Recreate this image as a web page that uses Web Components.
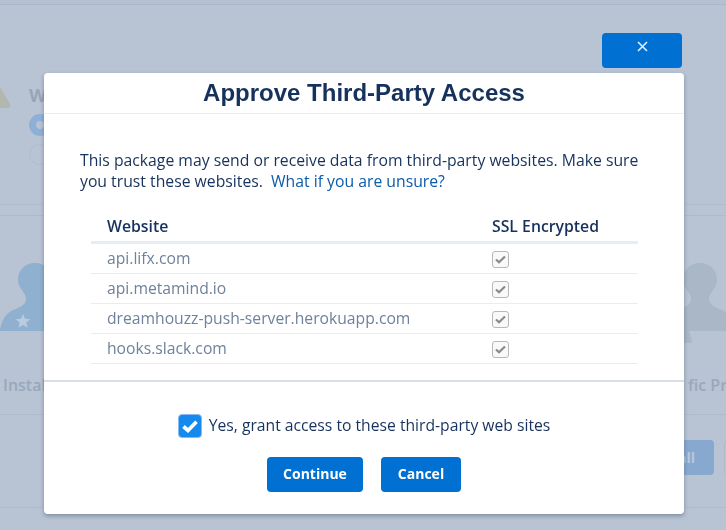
<!DOCTYPE html>
<html>
<head>
<meta charset="utf-8">
<title>Approve Third-Party Access</title>
<style>
  html, body { margin: 0; height: 100%; overflow: hidden; }
  body { background: #b8c4d3; font-family: "Open Sans", "Liberation Sans", sans-serif; color: #16325c; }
</style>
</head>
<body>
<install-page></install-page>
<approve-modal heading="Approve Third-Party Access">
  <site-row name="api.lifx.com"></site-row>
  <site-row name="api.metamind.io"></site-row>
  <site-row name="dreamhouzz-push-server.herokuapp.com"></site-row>
  <site-row name="hooks.slack.com"></site-row>
</approve-modal>

<script>
// person silhouette used behind the dialog, star and back shoulder are optional
const personSvg = (fill, star, back) => `
  <svg width="70" height="80" viewBox="0 0 70 80">
    ${back ? `<path fill="${fill}" d="M19 62C24 66 26 72 27 80H19z"/>` : ''}
    <path fill="${fill}" d="M35 0C24 0 18 8 18 17C18 26 26 29 26 36C26 42 20 44 13 47C5 50 1 60 0 67V68H70V67C69 60 65 50 57 47C50 44 44 42 44 36C44 29 52 26 52 17C52 8 46 0 35 0Z"/>
    ${star ? '<path fill="#b9cbdd" d="M23 51l2 4.800 5.400.4-4.100 3.400 1.300 5.200-4.600-2.800-4.600 2.800 1.300-5.200-4.100-3.400 5.400-.4z"/>' : ''}
  </svg>`;

const pageTemplate = document.createElement('template');
pageTemplate.innerHTML = /* html */`
  <style>
  :host {
    display: block;
    height: 530px;
    overflow: hidden;
    color: #98a7bb;
  }
  .top {
    height: 4px;
    border-bottom: 1px solid #aab8c9;
    background: #b5c1d0;
  }
  .status {
    border-bottom: 1px solid #b0bdcd;
    padding: 80px 0 0 29px;
    height: 119px;
    display: flex;
    flex-direction: column;
    position: relative;
  }
  .warn {
    position: absolute;
    left: -14px;
    top: 78px;
  }
  .status b {
    font-size: 18px;
    line-height: 20px;
    color: #98a5b8;
    height: 20px;
    font-weight: 700;
    margin-bottom: 9px;
  }
  .ring {
    width: 22px;
    height: 22px;
    border: 7px solid #8fb0d6;
    border-radius: 50%;
    box-sizing: border-box;
    margin-bottom: 8px;
  }
  .ghost {
    width: 21px;
    height: 21px;
    border: 1px solid #b0bdcd;
    border-radius: 50%;
    box-sizing: border-box;
  }
  .gap {
    height: 10px;
    border-bottom: 1px solid #aebbcb;
  }
  .people {
    height: 199px;
    border-bottom: 1px solid #aebbcb;
    box-sizing: border-box;
    padding-top: 47px;
    display: flex;
    justify-content: space-between;
  }
  .who {
    display: flex;
    flex-direction: column;
    font-size: 16px;
    font-weight: 600;
    line-height: 22px;
    gap: 31px;
    color: #99a8bc;
    width: 70px;
  }
  .who svg { display: block; }
  .who.left span { padding-left: 3px; }
  .who.right { margin-right: -9px; }
  .who.right span { padding-left: 23px; white-space: nowrap; }
  .actions {
    height: 93px;
    border-bottom: 1px solid #aebbcb;
    box-sizing: border-box;
    padding-top: 25px;
    display: flex;
    justify-content: flex-end;
    gap: 10px;
    margin-right: -10px;
  }
  .all {
    width: 96px;
    height: 35px;
    background: #88a9cf;
    color: #b7c8dd;
    border-radius: 4px;
    font-size: 14px;
    font-weight: 700;
    line-height: 35px;
    text-align: right;
    padding-right: 19px;
    box-sizing: border-box;
  }
  .outline {
    width: 12px;
    height: 35px;
    border: 1px solid #aebbcb;
    border-radius: 4px 0 0 4px;
    box-sizing: border-box;
  }
  </style>
  <div class="top"></div>
  <div class="status">
    <svg class="warn" width="26" height="26" viewBox="0 0 26 26"><path fill="#b3b8ae" d="M13 2 24 21c1 2 0 4-2 4H4c-2 0-3-2-2-4z"/></svg>
    <b>W</b>
    <div class="ring"></div>
    <div class="ghost"></div>
  </div>
  <div class="gap"></div>
  <div class="people">
    <div class="who left">${personSvg('#8fb0cf', true, false)}<span>Instal</span></div>
    <div class="who right">${personSvg('#a9b7c6', false, true)}<span>fic Pro</span></div>
  </div>
  <div class="actions">
    <div class="all">all</div>
    <div class="outline"></div>
  </div>
`;

class InstallPage extends HTMLElement {
  constructor() {
    super();
    this.attachShadow({ mode: 'open' });
    this.shadowRoot.appendChild(pageTemplate.content.cloneNode(true));
  }
}

const rowTemplate = document.createElement('template');
rowTemplate.innerHTML = /* html */`
  <style>
  :host {
    display: grid;
    grid-template-columns: 385px 1fr;
    height: 30px;
    border-bottom: 1px solid #e6edf5;
    box-sizing: border-box;
    padding-left: 16px;
    align-items: center;
    font-size: 15.7px;
    color: #6f819b;
  }
  .name { margin-bottom: 1px; }
  .box {
    width: 17px;
    height: 17px;
    margin-top: 2px;
    border: 1px solid #b8b8b8;
    border-radius: 3px;
    box-sizing: border-box;
    background: #f9f9f9;
    display: flex;
    align-items: center;
    justify-content: center;
  }
  </style>
  <span class="name"></span>
  <span class="box">
    <svg width="11" height="9" viewBox="0 0 11 9"><path fill="none" stroke="#8a8a8a" stroke-width="2.200" d="M1 4.500 4 7.200 10 1.500"/></svg>
  </span>
`;

class SiteRow extends HTMLElement {
  constructor() {
    super();
    this.attachShadow({ mode: 'open' });
    this.shadowRoot.appendChild(rowTemplate.content.cloneNode(true));
  }

  connectedCallback() {
    this.shadowRoot.querySelector('.name').textContent = this.getAttribute('name');
  }
}

const buttonTemplate = document.createElement('template');
buttonTemplate.innerHTML = /* html */`
  <style>
  :host {
    display: inline-flex;
    align-items: center;
    justify-content: center;
    height: 35px;
    padding-bottom: 2px;
    background: #0070d2;
    color: #fff;
    border-radius: 4px;
    font-size: 14px;
    font-weight: 700;
    box-sizing: border-box;
  }
  </style>
  <slot></slot>
`;

class ActionButton extends HTMLElement {
  constructor() {
    super();
    this.attachShadow({ mode: 'open' });
    this.shadowRoot.appendChild(buttonTemplate.content.cloneNode(true));
  }
}

const modalTemplate = document.createElement('template');
modalTemplate.innerHTML = /* html */`
  <style>
  :host {
    display: block;
    position: fixed;
    left: 44px;
    top: 33px;
    width: 640px;
  }
  .close {
    display: flex;
    width: 80px;
    height: 35px;
    margin: 0 2px 5px auto;
    background: #0070d2;
    border-radius: 4px;
    justify-content: center;
    padding-top: 8px;
    box-sizing: border-box;
  }
  .dialog {
    background: #fff;
    border-radius: 4px;
    box-shadow: 0 2px 4px rgba(60, 75, 100, .45);
    height: 441px;
    display: flex;
    flex-direction: column;
  }
  h1 {
    margin: 0;
    height: 41px;
    box-sizing: border-box;
    border-bottom: 1px solid #e6edf5;
    font: 700 24px/40px "Liberation Sans", Arial, sans-serif;
    text-align: center;
    color: #16325c;
  }
  .body {
    height: 268px;
    box-sizing: border-box;
    padding: 36px 46px 0 36px;
    border-bottom: 2px solid #d8dde6;
  }
  p {
    margin: 0 0 20px;
    font-size: 15.76px;
    line-height: 21px;
    white-space: nowrap;
  }
  a { color: #0b5cab; text-decoration: none; }
  .table { margin-left: 11px; }
  .head {
    display: grid;
    grid-template-columns: 385px 1fr;
    height: 29px;
    padding-left: 16px;
    border-bottom: 3px solid #e6edf5;
    font-size: 15.8px;
    font-weight: 600;
    line-height: 29px;
  }
  .foot {
    display: flex;
    flex-direction: column;
    align-items: center;
    padding-top: 32px;
    gap: 19px;
  }
  .grant {
    display: flex;
    align-items: center;
    gap: 7px;
    font-size: 15.7px;
    height: 24px;
  }
  .grant .label { margin-bottom: 3px; }
  .tick {
    width: 24px;
    height: 24px;
    border: 1px solid #8ab8f0;
    border-radius: 4px;
    background: #1589ee;
    box-sizing: border-box;
    display: flex;
    align-items: center;
    justify-content: center;
  }
  .buttons { display: flex; gap: 18px; }
  action-button.continue { width: 96px; }
  action-button.cancel { width: 80px; }
  </style>
  <div class="close">
    <svg width="11" height="11" viewBox="0 0 11 11"><path stroke="#e8eef6" stroke-width="1.600" d="M1 1 10 10M10 1 1 10"/></svg>
  </div>
  <div class="dialog">
    <h1></h1>
    <div class="body">
      <p>This package may send or receive data from third-party websites. Make sure<br>you trust these websites.&nbsp; <a>What if you are unsure?</a></p>
      <div class="table">
        <div class="head"><span>Website</span><span>SSL Encrypted</span></div>
        <slot></slot>
      </div>
    </div>
    <div class="foot">
      <div class="grant">
        <span class="tick"><svg width="16" height="13" viewBox="0 0 16 13"><path fill="none" stroke="#fff" stroke-width="3.700" d="M1.500 6.500 6 10.500 14.500 1.800"/></svg></span>
        <span class="label">Yes, grant access to these third-party web sites</span>
      </div>
      <div class="buttons">
        <action-button class="continue">Continue</action-button>
        <action-button class="cancel">Cancel</action-button>
      </div>
    </div>
  </div>
`;

class ApproveModal extends HTMLElement {
  constructor() {
    super();
    this.attachShadow({ mode: 'open' });
    this.shadowRoot.appendChild(modalTemplate.content.cloneNode(true));
  }

  connectedCallback() {
    this.shadowRoot.querySelector('h1').textContent = this.getAttribute('heading');
  }
}

customElements.define('install-page', InstallPage);
customElements.define('site-row', SiteRow);
customElements.define('action-button', ActionButton);
customElements.define('approve-modal', ApproveModal);
</script>
</body>
</html>
